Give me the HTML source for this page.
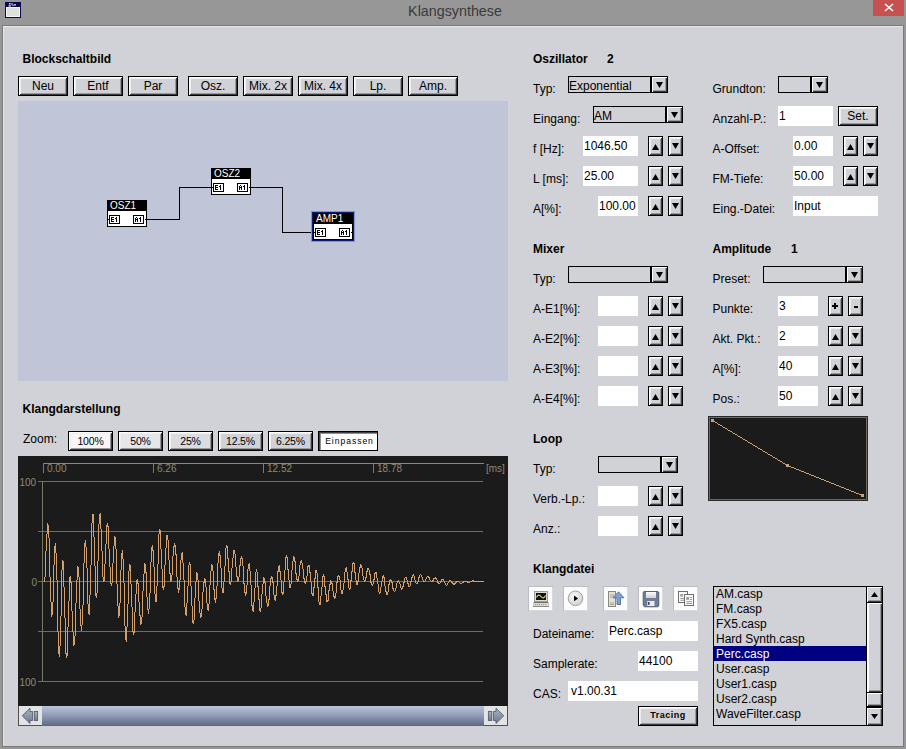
<!DOCTYPE html><html><head><meta charset="utf-8"><style>html,body{margin:0;padding:0;}body{width:906px;height:749px;position:relative;overflow:hidden;background:#9a9a9a;font-family:"Liberation Sans",sans-serif;}</style></head><body>
<div style="position:absolute;left:0px;top:0px;width:906px;height:749px;background:#979797;"></div>
<div style="position:absolute;left:5px;top:2px;width:16px;height:16px;background:#0a0a50;"></div>
<div style="position:absolute;left:6px;top:7px;width:14px;height:10px;background:#dde1d9;box-shadow: inset 0 0 0 1px #f4f4fa;"></div>
<svg style="position:absolute;left:5px;top:2px" width="16" height="6"><g fill="#e8e8f0"><rect x="4" y="1" width="1.5" height="1.5"/><rect x="3.5" y="3.3" width="2.5" height="1.2"/><rect x="6.3" y="1.3" width="1.3" height="1.3"/><rect x="7.3" y="2.5" width="1.3" height="1.3"/><rect x="9" y="2.3" width="2" height="1.2"/></g></svg>
<div style="position:absolute;left:355px;width:200px;text-align:center;top:3.90px;font-size:14.3px;line-height:14.3px;font-weight:normal;color:#3a3a3a;white-space:nowrap;">Klangsynthese</div>
<div style="position:absolute;left:873px;top:0px;width:31px;height:16px;background:#c75050;"></div>
<svg style="position:absolute;left:884px;top:3px" width="10" height="9"><path d="M1,1 L9,8 M9,1 L1,8" stroke="#fff" stroke-width="1.6"/></svg>
<div style="position:absolute;left:2px;top:25px;width:902px;height:722px;background:#7a7a7a;"></div>
<div style="position:absolute;left:3px;top:26px;width:900px;height:720px;background:#d1d2d7;"></div>
<div style="position:absolute;left:3px;top:26px;width:900px;height:1px;background:#e8e8ec;"></div>
<div style="position:absolute;left:3px;top:26px;width:1px;height:720px;background:#e8e8ec;"></div>
<div style="position:absolute;left:22.5px;top:52.84px;font-size:12px;line-height:12px;font-weight:bold;color:#000;white-space:nowrap;">Blockschaltbild</div>
<div style="position:absolute;left:18px;top:76px;width:48px;height:18px;border:1px solid #000;background:#d1d2d7;box-shadow: inset 1px 1px #fff, inset -1px -1px #3a3a3a, inset 2px 2px #eeeef0, inset -2px -2px #9a9a9a;"></div>
<div style="position:absolute;left:-57.0px;width:200px;text-align:center;top:79.84px;font-size:12px;line-height:12px;font-weight:normal;color:#000;white-space:nowrap;">Neu</div>
<div style="position:absolute;left:73px;top:76px;width:48px;height:18px;border:1px solid #000;background:#d1d2d7;box-shadow: inset 1px 1px #fff, inset -1px -1px #3a3a3a, inset 2px 2px #eeeef0, inset -2px -2px #9a9a9a;"></div>
<div style="position:absolute;left:-2.0px;width:200px;text-align:center;top:79.84px;font-size:12px;line-height:12px;font-weight:normal;color:#000;white-space:nowrap;">Entf</div>
<div style="position:absolute;left:128px;top:76px;width:48px;height:18px;border:1px solid #000;background:#d1d2d7;box-shadow: inset 1px 1px #fff, inset -1px -1px #3a3a3a, inset 2px 2px #eeeef0, inset -2px -2px #9a9a9a;"></div>
<div style="position:absolute;left:53.0px;width:200px;text-align:center;top:79.84px;font-size:12px;line-height:12px;font-weight:normal;color:#000;white-space:nowrap;">Par</div>
<div style="position:absolute;left:188px;top:76px;width:48px;height:18px;border:1px solid #000;background:#d1d2d7;box-shadow: inset 1px 1px #fff, inset -1px -1px #3a3a3a, inset 2px 2px #eeeef0, inset -2px -2px #9a9a9a;"></div>
<div style="position:absolute;left:113.0px;width:200px;text-align:center;top:79.84px;font-size:12px;line-height:12px;font-weight:normal;color:#000;white-space:nowrap;">Osz.</div>
<div style="position:absolute;left:243px;top:76px;width:48px;height:18px;border:1px solid #000;background:#d1d2d7;box-shadow: inset 1px 1px #fff, inset -1px -1px #3a3a3a, inset 2px 2px #eeeef0, inset -2px -2px #9a9a9a;"></div>
<div style="position:absolute;left:168.0px;width:200px;text-align:center;top:79.84px;font-size:12px;line-height:12px;font-weight:normal;color:#000;white-space:nowrap;">Mix. 2x</div>
<div style="position:absolute;left:298px;top:76px;width:48px;height:18px;border:1px solid #000;background:#d1d2d7;box-shadow: inset 1px 1px #fff, inset -1px -1px #3a3a3a, inset 2px 2px #eeeef0, inset -2px -2px #9a9a9a;"></div>
<div style="position:absolute;left:223.0px;width:200px;text-align:center;top:79.84px;font-size:12px;line-height:12px;font-weight:normal;color:#000;white-space:nowrap;">Mix. 4x</div>
<div style="position:absolute;left:353px;top:76px;width:48px;height:18px;border:1px solid #000;background:#d1d2d7;box-shadow: inset 1px 1px #fff, inset -1px -1px #3a3a3a, inset 2px 2px #eeeef0, inset -2px -2px #9a9a9a;"></div>
<div style="position:absolute;left:278.0px;width:200px;text-align:center;top:79.84px;font-size:12px;line-height:12px;font-weight:normal;color:#000;white-space:nowrap;">Lp.</div>
<div style="position:absolute;left:408px;top:76px;width:48px;height:18px;border:1px solid #000;background:#d1d2d7;box-shadow: inset 1px 1px #fff, inset -1px -1px #3a3a3a, inset 2px 2px #eeeef0, inset -2px -2px #9a9a9a;"></div>
<div style="position:absolute;left:333.0px;width:200px;text-align:center;top:79.84px;font-size:12px;line-height:12px;font-weight:normal;color:#000;white-space:nowrap;">Amp.</div>
<div style="position:absolute;left:18px;top:101px;width:490px;height:280px;background:#c0c6d7;"></div>
<div style="position:absolute;left:147px;top:219px;width:32px;height:1px;background:#000;"></div>
<div style="position:absolute;left:179px;top:187px;width:1px;height:33px;background:#000;"></div>
<div style="position:absolute;left:179px;top:187px;width:32px;height:1px;background:#000;"></div>
<div style="position:absolute;left:251px;top:187px;width:31px;height:1px;background:#000;"></div>
<div style="position:absolute;left:282px;top:187px;width:1px;height:46px;background:#000;"></div>
<div style="position:absolute;left:282px;top:232px;width:31px;height:1px;background:#000;"></div>
<div style="position:absolute;left:107px;top:200px;width:40px;height:27px;background:#000;"></div>
<div style="position:absolute;left:108px;top:211px;width:38px;height:15px;background:#fff;"></div>
<div style="position:absolute;left:110px;top:200.84px;font-size:10px;line-height:10px;font-weight:normal;color:#fff;white-space:nowrap;">OSZ1</div>
<svg style="position:absolute;left:109px;top:215px" width="11" height="9" shape-rendering="crispEdges"><rect x="0.5" y="0.5" width="10" height="8" fill="#fff" stroke="#000"/><rect x="2" y="2" width="1" height="1"/><rect x="3" y="2" width="1" height="1"/><rect x="4" y="2" width="1" height="1"/><rect x="2" y="3" width="1" height="1"/><rect x="2" y="4" width="1" height="1"/><rect x="3" y="4" width="1" height="1"/><rect x="4" y="4" width="1" height="1"/><rect x="2" y="5" width="1" height="1"/><rect x="2" y="6" width="1" height="1"/><rect x="3" y="6" width="1" height="1"/><rect x="4" y="6" width="1" height="1"/><rect x="7" y="2" width="1" height="1"/><rect x="6" y="3" width="1" height="1"/><rect x="7" y="3" width="1" height="1"/><rect x="7" y="4" width="1" height="1"/><rect x="7" y="5" width="1" height="1"/><rect x="7" y="6" width="1" height="1"/></svg>
<svg style="position:absolute;left:133px;top:215px" width="11" height="9" shape-rendering="crispEdges"><rect x="0.5" y="0.5" width="10" height="8" fill="#fff" stroke="#000"/><rect x="3" y="2" width="1" height="1"/><rect x="2" y="3" width="1" height="1"/><rect x="4" y="3" width="1" height="1"/><rect x="2" y="4" width="1" height="1"/><rect x="3" y="4" width="1" height="1"/><rect x="4" y="4" width="1" height="1"/><rect x="2" y="5" width="1" height="1"/><rect x="4" y="5" width="1" height="1"/><rect x="2" y="6" width="1" height="1"/><rect x="4" y="6" width="1" height="1"/><rect x="7" y="2" width="1" height="1"/><rect x="6" y="3" width="1" height="1"/><rect x="7" y="3" width="1" height="1"/><rect x="7" y="4" width="1" height="1"/><rect x="7" y="5" width="1" height="1"/><rect x="7" y="6" width="1" height="1"/></svg>
<div style="position:absolute;left:107px;top:219px;width:2px;height:1px;background:#000;"></div>
<div style="position:absolute;left:145px;top:219px;width:2px;height:1px;background:#000;"></div>
<div style="position:absolute;left:211px;top:168px;width:40px;height:27px;background:#000;"></div>
<div style="position:absolute;left:212px;top:179px;width:38px;height:15px;background:#fff;"></div>
<div style="position:absolute;left:214px;top:168.84px;font-size:10px;line-height:10px;font-weight:normal;color:#fff;white-space:nowrap;">OSZ2</div>
<svg style="position:absolute;left:213px;top:183px" width="11" height="9" shape-rendering="crispEdges"><rect x="0.5" y="0.5" width="10" height="8" fill="#fff" stroke="#000"/><rect x="2" y="2" width="1" height="1"/><rect x="3" y="2" width="1" height="1"/><rect x="4" y="2" width="1" height="1"/><rect x="2" y="3" width="1" height="1"/><rect x="2" y="4" width="1" height="1"/><rect x="3" y="4" width="1" height="1"/><rect x="4" y="4" width="1" height="1"/><rect x="2" y="5" width="1" height="1"/><rect x="2" y="6" width="1" height="1"/><rect x="3" y="6" width="1" height="1"/><rect x="4" y="6" width="1" height="1"/><rect x="7" y="2" width="1" height="1"/><rect x="6" y="3" width="1" height="1"/><rect x="7" y="3" width="1" height="1"/><rect x="7" y="4" width="1" height="1"/><rect x="7" y="5" width="1" height="1"/><rect x="7" y="6" width="1" height="1"/></svg>
<svg style="position:absolute;left:237px;top:183px" width="11" height="9" shape-rendering="crispEdges"><rect x="0.5" y="0.5" width="10" height="8" fill="#fff" stroke="#000"/><rect x="3" y="2" width="1" height="1"/><rect x="2" y="3" width="1" height="1"/><rect x="4" y="3" width="1" height="1"/><rect x="2" y="4" width="1" height="1"/><rect x="3" y="4" width="1" height="1"/><rect x="4" y="4" width="1" height="1"/><rect x="2" y="5" width="1" height="1"/><rect x="4" y="5" width="1" height="1"/><rect x="2" y="6" width="1" height="1"/><rect x="4" y="6" width="1" height="1"/><rect x="7" y="2" width="1" height="1"/><rect x="6" y="3" width="1" height="1"/><rect x="7" y="3" width="1" height="1"/><rect x="7" y="4" width="1" height="1"/><rect x="7" y="5" width="1" height="1"/><rect x="7" y="6" width="1" height="1"/></svg>
<div style="position:absolute;left:211px;top:187px;width:2px;height:1px;background:#000;"></div>
<div style="position:absolute;left:249px;top:187px;width:2px;height:1px;background:#000;"></div>
<div style="position:absolute;left:311px;top:211px;width:44px;height:31px;background:#7d95d8;"></div>
<div style="position:absolute;left:312px;top:212px;width:42px;height:29px;background:#0c1a70;"></div>
<div style="position:absolute;left:313px;top:213px;width:40px;height:27px;background:#000;"></div>
<div style="position:absolute;left:314px;top:224px;width:38px;height:15px;background:#fff;"></div>
<div style="position:absolute;left:316px;top:213.84px;font-size:10px;line-height:10px;font-weight:normal;color:#fff;white-space:nowrap;">AMP1</div>
<svg style="position:absolute;left:315px;top:228px" width="11" height="9" shape-rendering="crispEdges"><rect x="0.5" y="0.5" width="10" height="8" fill="#fff" stroke="#000"/><rect x="2" y="2" width="1" height="1"/><rect x="3" y="2" width="1" height="1"/><rect x="4" y="2" width="1" height="1"/><rect x="2" y="3" width="1" height="1"/><rect x="2" y="4" width="1" height="1"/><rect x="3" y="4" width="1" height="1"/><rect x="4" y="4" width="1" height="1"/><rect x="2" y="5" width="1" height="1"/><rect x="2" y="6" width="1" height="1"/><rect x="3" y="6" width="1" height="1"/><rect x="4" y="6" width="1" height="1"/><rect x="7" y="2" width="1" height="1"/><rect x="6" y="3" width="1" height="1"/><rect x="7" y="3" width="1" height="1"/><rect x="7" y="4" width="1" height="1"/><rect x="7" y="5" width="1" height="1"/><rect x="7" y="6" width="1" height="1"/></svg>
<svg style="position:absolute;left:339px;top:228px" width="11" height="9" shape-rendering="crispEdges"><rect x="0.5" y="0.5" width="10" height="8" fill="#fff" stroke="#000"/><rect x="3" y="2" width="1" height="1"/><rect x="2" y="3" width="1" height="1"/><rect x="4" y="3" width="1" height="1"/><rect x="2" y="4" width="1" height="1"/><rect x="3" y="4" width="1" height="1"/><rect x="4" y="4" width="1" height="1"/><rect x="2" y="5" width="1" height="1"/><rect x="4" y="5" width="1" height="1"/><rect x="2" y="6" width="1" height="1"/><rect x="4" y="6" width="1" height="1"/><rect x="7" y="2" width="1" height="1"/><rect x="6" y="3" width="1" height="1"/><rect x="7" y="3" width="1" height="1"/><rect x="7" y="4" width="1" height="1"/><rect x="7" y="5" width="1" height="1"/><rect x="7" y="6" width="1" height="1"/></svg>
<div style="position:absolute;left:313px;top:232px;width:2px;height:1px;background:#000;"></div>
<div style="position:absolute;left:351px;top:232px;width:2px;height:1px;background:#000;"></div>
<div style="position:absolute;left:22.5px;top:402.84px;font-size:12px;line-height:12px;font-weight:bold;color:#000;white-space:nowrap;">Klangdarstellung</div>
<div style="position:absolute;left:23px;top:433.34px;font-size:12px;line-height:12px;font-weight:normal;color:#000;white-space:nowrap;">Zoom:</div>
<div style="position:absolute;left:68px;top:431px;width:43px;height:18px;border:1px solid #000;background:#f6f6f8;box-shadow: inset 1px 1px #fff, inset -1px -1px #3a3a3a, inset 2px 2px #eeeef0, inset -2px -2px #9a9a9a;"></div>
<div style="position:absolute;left:-9.5px;width:200px;text-align:center;top:435.61px;font-size:10.5px;line-height:10.5px;font-weight:normal;color:#000;white-space:nowrap;letter-spacing:-0.2px;">100%</div>
<div style="position:absolute;left:118px;top:431px;width:43px;height:18px;border:1px solid #000;background:#e6e6ea;box-shadow: inset 1px 1px #fff, inset -1px -1px #3a3a3a, inset 2px 2px #eeeef0, inset -2px -2px #9a9a9a;"></div>
<div style="position:absolute;left:40.5px;width:200px;text-align:center;top:435.61px;font-size:10.5px;line-height:10.5px;font-weight:normal;color:#000;white-space:nowrap;letter-spacing:-0.2px;">50%</div>
<div style="position:absolute;left:168px;top:431px;width:43px;height:18px;border:1px solid #000;background:#dcdcdf;box-shadow: inset 1px 1px #fff, inset -1px -1px #3a3a3a, inset 2px 2px #eeeef0, inset -2px -2px #9a9a9a;"></div>
<div style="position:absolute;left:90.5px;width:200px;text-align:center;top:435.61px;font-size:10.5px;line-height:10.5px;font-weight:normal;color:#000;white-space:nowrap;letter-spacing:-0.2px;">25%</div>
<div style="position:absolute;left:218px;top:431px;width:43px;height:18px;border:1px solid #000;background:#d1d2d7;box-shadow: inset 1px 1px #fff, inset -1px -1px #3a3a3a, inset 2px 2px #eeeef0, inset -2px -2px #9a9a9a;"></div>
<div style="position:absolute;left:140.5px;width:200px;text-align:center;top:435.61px;font-size:10.5px;line-height:10.5px;font-weight:normal;color:#000;white-space:nowrap;letter-spacing:-0.2px;">12.5%</div>
<div style="position:absolute;left:268px;top:431px;width:43px;height:18px;border:1px solid #000;background:#d1d2d7;box-shadow: inset 1px 1px #fff, inset -1px -1px #3a3a3a, inset 2px 2px #eeeef0, inset -2px -2px #9a9a9a;"></div>
<div style="position:absolute;left:190.5px;width:200px;text-align:center;top:435.61px;font-size:10.5px;line-height:10.5px;font-weight:normal;color:#000;white-space:nowrap;letter-spacing:-0.2px;">6.25%</div>
<div style="position:absolute;left:318px;top:431px;width:58px;height:18px;border:1px solid #000;background:#fff;box-shadow: inset 1px 1px #404040, inset 2px 2px #909090;"></div>
<div style="position:absolute;left:248.0px;width:200px;text-align:center;top:437.22px;font-size:8.6px;line-height:8.6px;font-weight:normal;color:#000;white-space:nowrap;letter-spacing:0.95px;margin-left:1.5px;">Einpassen</div>
<div style="position:absolute;left:18px;top:456px;width:490px;height:250px;background:#1b1b1b;"></div>
<div style="position:absolute;left:43px;top:463px;width:441px;height:1px;background:#8c8976;"></div>
<div style="position:absolute;left:43px;top:463px;width:1px;height:10px;background:#7d7a68;"></div>
<div style="position:absolute;left:47px;top:463.54px;font-size:10px;line-height:10px;font-weight:normal;color:#8e8a74;white-space:nowrap;">0.00</div>
<div style="position:absolute;left:153px;top:463px;width:1px;height:10px;background:#7d7a68;"></div>
<div style="position:absolute;left:157px;top:463.54px;font-size:10px;line-height:10px;font-weight:normal;color:#8e8a74;white-space:nowrap;">6.26</div>
<div style="position:absolute;left:263px;top:463px;width:1px;height:10px;background:#7d7a68;"></div>
<div style="position:absolute;left:267px;top:463.54px;font-size:10px;line-height:10px;font-weight:normal;color:#8e8a74;white-space:nowrap;">12.52</div>
<div style="position:absolute;left:373px;top:463px;width:1px;height:10px;background:#7d7a68;"></div>
<div style="position:absolute;left:377px;top:463.54px;font-size:10px;line-height:10px;font-weight:normal;color:#8e8a74;white-space:nowrap;">18.78</div>
<div style="position:absolute;left:486px;top:463.54px;font-size:10px;line-height:10px;font-weight:normal;color:#8e8a74;white-space:nowrap;">[ms]</div>
<div style="position:absolute;left:38px;top:481px;width:445px;height:1px;background:#6f6d5e;"></div>
<div style="position:absolute;left:38px;top:531px;width:445px;height:1px;background:#6f6d5e;"></div>
<div style="position:absolute;left:38px;top:581px;width:445px;height:1px;background:#6f6d5e;"></div>
<div style="position:absolute;left:38px;top:631px;width:445px;height:1px;background:#6f6d5e;"></div>
<div style="position:absolute;left:38px;top:681px;width:445px;height:1px;background:#6f6d5e;"></div>
<div style="position:absolute;left:42px;top:481px;width:1px;height:201px;background:#7a7866;"></div>
<div style="position:absolute;left:19.5px;top:477.54px;font-size:10px;line-height:10px;font-weight:normal;color:#8e8a74;white-space:nowrap;">100</div>
<div style="position:absolute;left:31.5px;top:577.53px;font-size:10px;line-height:10px;font-weight:normal;color:#8e8a74;white-space:nowrap;">0</div>
<div style="position:absolute;left:19.5px;top:677.53px;font-size:10px;line-height:10px;font-weight:normal;color:#8e8a74;white-space:nowrap;">100</div>
<svg style="position:absolute;left:0;top:0" width="906" height="749" shape-rendering="crispEdges"><polyline points="43.5,581.5 44.5,581.5 44.5,579.5 45.5,574.5 45.5,564.5 45.5,555.5 46.5,546.5 46.5,537.5 47.5,530.5 47.5,525.5 47.5,523.5 48.5,526.5 48.5,532.5 49.5,542.5 49.5,554.5 49.5,569.5 50.5,583.5 50.5,596.5 51.5,607.5 51.5,613.5 51.5,616.5 52.5,613.5 52.5,607.5 53.5,596.5 53.5,584.5 53.5,571.5 54.5,559.5 54.5,549.5 55.5,543.5 55.5,547.5 56.5,557.5 56.5,571.5 57.5,588.5 57.5,606.5 57.5,624.5 58.5,639.5 58.5,650.5 59.5,656.5 59.5,651.5 60.5,640.5 60.5,624.5 61.5,607.5 61.5,590.5 61.5,575.5 62.5,565.5 62.5,560.5 63.5,561.5 63.5,568.5 63.5,579.5 64.5,593.5 64.5,610.5 65.5,625.5 65.5,639.5 65.5,650.5 66.5,656.5 66.5,657.5 67.5,653.5 67.5,645.5 67.5,633.5 68.5,620.5 68.5,607.5 69.5,594.5 69.5,584.5 69.5,578.5 70.5,576.5 70.5,579.5 71.5,585.5 71.5,594.5 71.5,605.5 72.5,616.5 72.5,626.5 73.5,636.5 73.5,642.5 73.5,645.5 74.5,644.5 74.5,640.5 75.5,632.5 75.5,621.5 75.5,609.5 76.5,597.5 76.5,585.5 77.5,575.5 77.5,569.5 77.5,566.5 78.5,567.5 78.5,572.5 79.5,581.5 79.5,591.5 79.5,603.5 80.5,614.5 80.5,623.5 81.5,628.5 81.5,630.5 81.5,628.5 82.5,621.5 82.5,611.5 83.5,598.5 83.5,583.5 83.5,569.5 84.5,556.5 84.5,546.5 85.5,540.5 85.5,539.5 85.5,542.5 86.5,550.5 86.5,561.5 87.5,573.5 87.5,587.5 87.5,599.5 88.5,608.5 88.5,613.5 89.5,614.5 89.5,610.5 89.5,601.5 90.5,588.5 90.5,573.5 91.5,556.5 91.5,541.5 91.5,527.5 92.5,518.5 92.5,514.5 93.5,514.5 93.5,520.5 93.5,530.5 94.5,543.5 94.5,558.5 95.5,572.5 95.5,585.5 95.5,593.5 96.5,597.5 96.5,596.5 97.5,590.5 97.5,581.5 97.5,568.5 98.5,554.5 98.5,540.5 98.5,528.5 99.5,519.5 99.5,514.5 100.5,513.5 100.5,516.5 100.5,523.5 101.5,533.5 101.5,545.5 102.5,556.5 102.5,566.5 102.5,574.5 103.5,579.5 103.5,581.5 104.5,580.5 104.5,575.5 104.5,568.5 105.5,559.5 105.5,549.5 106.5,539.5 106.5,531.5 106.5,526.5 107.5,523.5 107.5,524.5 108.5,528.5 108.5,535.5 108.5,543.5 109.5,553.5 109.5,562.5 110.5,570.5 110.5,577.5 110.5,582.5 111.5,585.5 111.5,584.5 112.5,581.5 112.5,575.5 112.5,567.5 113.5,558.5 113.5,549.5 114.5,542.5 114.5,537.5 114.5,536.5 115.5,538.5 115.5,544.5 116.5,553.5 116.5,564.5 116.5,577.5 117.5,590.5 117.5,601.5 118.5,610.5 118.5,615.5 118.5,617.5 119.5,614.5 119.5,607.5 120.5,598.5 120.5,586.5 120.5,575.5 121.5,564.5 121.5,555.5 122.5,550.5 122.5,554.5 123.5,562.5 123.5,575.5 124.5,589.5 124.5,605.5 124.5,620.5 125.5,631.5 125.5,638.5 126.5,641.5 126.5,639.5 126.5,632.5 127.5,622.5 127.5,610.5 128.5,597.5 128.5,585.5 128.5,574.5 129.5,567.5 129.5,564.5 130.5,565.5 130.5,570.5 130.5,578.5 131.5,589.5 131.5,601.5 132.5,612.5 132.5,622.5 132.5,629.5 133.5,633.5 133.5,634.5 134.5,631.5 134.5,625.5 134.5,617.5 135.5,607.5 135.5,598.5 136.5,590.5 136.5,583.5 136.5,580.5 137.5,579.5 137.5,581.5 138.5,585.5 138.5,591.5 138.5,597.5 139.5,605.5 139.5,612.5 140.5,618.5 140.5,622.5 140.5,624.5 141.5,623.5 141.5,620.5 142.5,614.5 142.5,605.5 142.5,596.5 143.5,586.5 143.5,577.5 144.5,570.5 144.5,565.5 144.5,563.5 145.5,565.5 145.5,569.5 146.5,575.5 146.5,584.5 146.5,592.5 147.5,601.5 147.5,607.5 148.5,612.5 148.5,613.5 148.5,611.5 149.5,606.5 149.5,598.5 150.5,588.5 150.5,577.5 150.5,566.5 151.5,557.5 151.5,549.5 152.5,545.5 152.5,544.5 152.5,547.5 153.5,553.5 153.5,561.5 154.5,571.5 154.5,581.5 154.5,590.5 155.5,597.5 155.5,601.5 156.5,601.5 156.5,598.5 156.5,591.5 157.5,581.5 157.5,570.5 158.5,558.5 158.5,546.5 158.5,537.5 159.5,531.5 159.5,529.5 160.5,530.5 160.5,536.5 160.5,544.5 161.5,553.5 161.5,563.5 162.5,573.5 162.5,581.5 162.5,586.5 163.5,589.5 163.5,588.5 164.5,584.5 164.5,577.5 164.5,569.5 165.5,560.5 165.5,551.5 166.5,544.5 166.5,538.5 166.5,535.5 167.5,535.5 167.5,537.5 168.5,542.5 168.5,548.5 168.5,556.5 169.5,563.5 169.5,570.5 170.5,576.5 170.5,580.5 170.5,581.5 171.5,580.5 171.5,577.5 172.5,572.5 172.5,566.5 172.5,559.5 173.5,553.5 173.5,548.5 174.5,544.5 174.5,543.5 175.5,546.5 175.5,551.5 176.5,557.5 176.5,565.5 176.5,573.5 177.5,580.5 177.5,586.5 178.5,590.5 178.5,592.5 178.5,591.5 179.5,588.5 179.5,583.5 180.5,577.5 180.5,569.5 180.5,562.5 181.5,557.5 181.5,553.5 182.5,552.5 182.5,554.5 182.5,558.5 183.5,566.5 183.5,575.5 184.5,584.5 184.5,594.5 184.5,603.5 185.5,610.5 185.5,614.5 186.5,615.5 186.5,612.5 186.5,607.5 187.5,599.5 187.5,590.5 188.5,581.5 188.5,573.5 188.5,566.5 189.5,563.5 189.5,562.5 190.5,566.5 190.5,572.5 190.5,580.5 191.5,590.5 191.5,601.5 192.5,610.5 192.5,617.5 192.5,622.5 193.5,623.5 193.5,622.5 194.5,617.5 194.5,610.5 194.5,602.5 195.5,594.5 195.5,585.5 196.5,579.5 196.5,574.5 196.5,572.5 197.5,573.5 197.5,577.5 198.5,582.5 198.5,589.5 198.5,597.5 199.5,604.5 199.5,610.5 200.5,615.5 200.5,617.5 201.5,615.5 201.5,611.5 202.5,606.5 202.5,600.5 202.5,594.5 203.5,589.5 203.5,584.5 204.5,580.5 204.5,578.5 205.5,580.5 205.5,584.5 206.5,589.5 206.5,595.5 206.5,600.5 207.5,605.5 207.5,608.5 208.5,610.5 208.5,609.5 208.5,606.5 209.5,601.5 209.5,595.5 209.5,588.5 210.5,581.5 210.5,574.5 211.5,568.5 211.5,565.5 211.5,564.5 212.5,565.5 212.5,568.5 213.5,573.5 213.5,579.5 213.5,586.5 214.5,592.5 214.5,597.5 215.5,601.5 215.5,602.5 215.5,600.5 216.5,596.5 216.5,590.5 217.5,582.5 217.5,574.5 217.5,566.5 218.5,559.5 218.5,554.5 219.5,551.5 219.5,550.5 219.5,553.5 220.5,557.5 220.5,564.5 221.5,571.5 221.5,578.5 221.5,585.5 222.5,590.5 222.5,592.5 223.5,592.5 223.5,590.5 223.5,585.5 224.5,578.5 224.5,570.5 225.5,562.5 225.5,555.5 225.5,549.5 226.5,546.5 226.5,545.5 227.5,546.5 227.5,550.5 227.5,555.5 228.5,561.5 228.5,568.5 229.5,574.5 229.5,579.5 229.5,582.5 230.5,584.5 230.5,583.5 231.5,580.5 231.5,576.5 231.5,571.5 232.5,565.5 232.5,560.5 233.5,555.5 233.5,552.5 233.5,550.5 234.5,550.5 234.5,552.5 235.5,555.5 235.5,559.5 235.5,564.5 236.5,569.5 236.5,574.5 237.5,578.5 237.5,580.5 237.5,581.5 238.5,580.5 238.5,578.5 239.5,575.5 239.5,571.5 239.5,567.5 240.5,563.5 240.5,559.5 241.5,557.5 241.5,556.5 242.5,559.5 242.5,563.5 243.5,568.5 243.5,574.5 243.5,580.5 244.5,586.5 244.5,590.5 245.5,594.5 245.5,595.5 245.5,594.5 246.5,592.5 246.5,587.5 247.5,582.5 247.5,576.5 247.5,571.5 248.5,566.5 248.5,564.5 249.5,563.5 249.5,564.5 249.5,568.5 250.5,573.5 250.5,580.5 251.5,588.5 251.5,596.5 251.5,602.5 252.5,608.5 252.5,610.5 253.5,611.5 253.5,609.5 253.5,605.5 254.5,598.5 254.5,591.5 255.5,584.5 255.5,577.5 255.5,573.5 256.5,570.5 257.5,573.5 257.5,577.5 257.5,583.5 258.5,589.5 258.5,596.5 259.5,602.5 259.5,607.5 259.5,610.5 260.5,611.5 260.5,609.5 261.5,606.5 261.5,602.5 261.5,596.5 262.5,591.5 262.5,586.5 263.5,581.5 263.5,579.5 263.5,577.5 264.5,578.5 264.5,580.5 265.5,584.5 265.5,588.5 265.5,593.5 266.5,598.5 266.5,601.5 267.5,604.5 267.5,606.5 268.5,604.5 268.5,601.5 269.5,597.5 269.5,593.5 269.5,588.5 270.5,583.5 270.5,579.5 271.5,577.5 271.5,575.5 271.5,576.5 272.5,577.5 272.5,580.5 273.5,584.5 273.5,589.5 273.5,593.5 274.5,596.5 274.5,599.5 275.5,600.5 275.5,599.5 275.5,597.5 276.5,593.5 276.5,589.5 277.5,583.5 277.5,578.5 277.5,573.5 278.5,569.5 278.5,566.5 279.5,565.5 279.5,566.5 279.5,569.5 280.5,573.5 280.5,577.5 281.5,582.5 281.5,587.5 281.5,591.5 282.5,593.5 282.5,594.5 283.5,593.5 283.5,589.5 283.5,585.5 284.5,579.5 284.5,573.5 285.5,567.5 285.5,562.5 285.5,558.5 286.5,556.5 287.5,558.5 287.5,561.5 287.5,566.5 288.5,572.5 288.5,577.5 289.5,582.5 289.5,585.5 289.5,587.5 290.5,587.5 290.5,585.5 291.5,582.5 291.5,577.5 291.5,572.5 292.5,567.5 292.5,562.5 293.5,559.5 293.5,557.5 293.5,556.5 294.5,557.5 294.5,559.5 295.5,563.5 295.5,567.5 295.5,571.5 296.5,575.5 296.5,578.5 297.5,580.5 297.5,581.5 298.5,579.5 298.5,577.5 299.5,574.5 299.5,570.5 299.5,566.5 300.5,563.5 300.5,561.5 301.5,560.5 301.5,561.5 302.5,564.5 302.5,567.5 303.5,570.5 303.5,573.5 303.5,577.5 304.5,579.5 304.5,582.5 305.5,583.5 305.5,582.5 306.5,580.5 306.5,577.5 307.5,574.5 307.5,570.5 307.5,567.5 308.5,565.5 309.5,565.5 309.5,567.5 309.5,570.5 310.5,574.5 310.5,579.5 311.5,584.5 311.5,588.5 311.5,592.5 312.5,594.5 312.5,595.5 313.5,595.5 313.5,592.5 313.5,589.5 314.5,585.5 314.5,580.5 315.5,576.5 315.5,572.5 315.5,570.5 316.5,570.5 316.5,571.5 317.5,574.5 317.5,578.5 317.5,584.5 318.5,590.5 318.5,595.5 318.5,600.5 319.5,603.5 319.5,604.5 320.5,604.5 320.5,602.5 320.5,598.5 321.5,593.5 321.5,589.5 322.5,584.5 322.5,580.5 322.5,577.5 323.5,575.5 324.5,577.5 324.5,580.5 324.5,584.5 325.5,588.5 325.5,592.5 326.5,596.5 326.5,599.5 326.5,601.5 327.5,601.5 328.5,599.5 328.5,596.5 328.5,592.5 329.5,588.5 329.5,585.5 330.5,583.5 330.5,581.5 330.5,580.5 331.5,581.5 331.5,582.5 332.5,584.5 332.5,587.5 332.5,589.5 333.5,592.5 333.5,595.5 334.5,597.5 334.5,598.5 335.5,596.5 335.5,594.5 336.5,591.5 336.5,588.5 336.5,584.5 337.5,580.5 337.5,577.5 338.5,575.5 338.5,574.5 338.5,575.5 339.5,576.5 339.5,578.5 340.5,581.5 340.5,585.5 340.5,588.5 341.5,591.5 341.5,593.5 342.5,593.5 342.5,591.5 343.5,588.5 343.5,585.5 344.5,580.5 344.5,576.5 344.5,573.5 345.5,570.5 345.5,568.5 346.5,567.5 346.5,568.5 346.5,570.5 347.5,573.5 347.5,577.5 348.5,581.5 348.5,584.5 348.5,587.5 349.5,588.5 349.5,589.5 350.5,588.5 350.5,585.5 350.5,582.5 351.5,578.5 351.5,573.5 352.5,569.5 352.5,565.5 352.5,563.5 353.5,562.5 354.5,564.5 354.5,567.5 354.5,570.5 355.5,574.5 355.5,578.5 356.5,581.5 356.5,583.5 356.5,584.5 357.5,584.5 357.5,582.5 358.5,580.5 358.5,577.5 358.5,574.5 359.5,571.5 359.5,568.5 360.5,566.5 360.5,564.5 361.5,565.5 361.5,566.5 362.5,569.5 362.5,571.5 362.5,574.5 363.5,577.5 363.5,579.5 364.5,580.5 364.5,581.5 365.5,580.5 365.5,578.5 366.5,576.5 366.5,574.5 366.5,572.5 367.5,570.5 367.5,568.5 368.5,568.5 368.5,569.5 369.5,570.5 369.5,573.5 370.5,575.5 370.5,578.5 370.5,581.5 371.5,583.5 371.5,584.5 372.5,585.5 372.5,584.5 373.5,583.5 373.5,580.5 374.5,578.5 374.5,576.5 374.5,574.5 375.5,572.5 376.5,572.5 376.5,573.5 376.5,576.5 377.5,579.5 377.5,582.5 378.5,585.5 378.5,588.5 378.5,591.5 379.5,592.5 379.5,593.5 380.5,592.5 380.5,590.5 380.5,588.5 381.5,585.5 381.5,582.5 382.5,579.5 382.5,577.5 382.5,576.5 383.5,575.5 383.5,576.5 384.5,578.5 384.5,581.5 384.5,584.5 385.5,587.5 385.5,590.5 386.5,592.5 386.5,594.5 387.5,594.5 387.5,592.5 388.5,591.5 388.5,588.5 388.5,585.5 389.5,583.5 389.5,581.5 390.5,579.5 391.5,580.5 391.5,581.5 392.5,583.5 392.5,585.5 392.5,587.5 393.5,589.5 393.5,590.5 394.5,591.5 395.5,590.5 395.5,588.5 396.5,587.5 396.5,585.5 396.5,583.5 397.5,582.5 397.5,581.5 398.5,580.5 398.5,581.5 399.5,582.5 399.5,583.5 400.5,584.5 400.5,586.5 400.5,587.5 401.5,588.5 401.5,589.5 402.5,588.5 402.5,587.5 403.5,585.5 403.5,583.5 404.5,581.5 404.5,580.5 404.5,578.5 405.5,577.5 406.5,577.5 406.5,578.5 406.5,579.5 407.5,580.5 407.5,582.5 408.5,584.5 408.5,585.5 408.5,586.5 409.5,586.5 410.5,585.5 410.5,583.5 410.5,582.5 411.5,580.5 411.5,578.5 412.5,576.5 412.5,575.5 413.5,574.5 413.5,575.5 414.5,576.5 414.5,577.5 414.5,579.5 415.5,580.5 415.5,582.5 416.5,583.5 417.5,583.5 417.5,582.5 418.5,581.5 418.5,579.5 418.5,578.5 419.5,576.5 419.5,575.5 420.5,574.5 421.5,575.5 421.5,576.5 422.5,577.5 422.5,578.5 422.5,579.5 423.5,580.5 423.5,581.5 424.5,581.5 425.5,580.5 425.5,579.5 426.5,578.5 426.5,577.5 427.5,576.5 428.5,576.5 428.5,577.5 429.5,577.5 429.5,578.5 429.5,579.5 430.5,580.5 431.5,581.5 432.5,581.5 432.5,580.5 433.5,580.5 433.5,579.5 433.5,578.5 434.5,578.5 435.5,577.5 435.5,578.5 436.5,578.5 436.5,579.5 437.5,580.5 437.5,581.5 437.5,582.5 438.5,582.5 438.5,583.5 439.5,583.5 440.5,582.5 440.5,581.5 441.5,581.5 441.5,580.5 441.5,579.5 442.5,579.5 443.5,579.5 443.5,580.5 444.5,581.5 444.5,582.5 445.5,583.5 445.5,584.5 446.5,585.5 447.5,584.5 447.5,583.5 448.5,582.5 449.5,581.5 449.5,580.5 450.5,580.5 451.5,581.5 451.5,582.5 452.5,582.5 452.5,583.5 453.5,583.5 453.5,584.5 454.5,584.5 454.5,583.5 455.5,583.5 455.5,582.5 456.5,582.5 456.5,581.5 457.5,581.5 458.5,581.5 459.5,582.5 460.5,583.5 461.5,583.5 462.5,582.5 463.5,582.5 463.5,581.5 464.5,581.5 465.5,581.5 466.5,581.5 467.5,581.5 467.5,582.5 468.5,582.5 469.5,582.5 470.5,581.5 471.5,581.5 472.5,580.5 473.5,580.5 473.5,581.5 474.5,581.5 475.5,581.5 476.5,581.5 477.5,581.5 478.5,581.5 479.5,581.5 480.5,581.5 481.5,581.5 482.5,581.5 483.5,581.5" fill="none" stroke="#d2a06e" stroke-width="1"/></svg>
<div style="position:absolute;left:18px;top:706px;width:490px;height:20px;background:linear-gradient(#b8c4d8,#8e9ab2 50%,#5c6882);"></div>
<div style="position:absolute;left:18px;top:706px;width:24px;height:20px;background:#e2e3e5;box-shadow: inset 1px 0 #505050, inset 0 -1px #505050;"></div>
<svg style="position:absolute;left:18px;top:706px" width="24" height="19"><defs><linearGradient id="ag" x1="0" y1="0" x2="0" y2="1"><stop offset="0" stop-color="#a8b4c4"/><stop offset="1" stop-color="#6c7a8e"/></linearGradient></defs><path d="M4.2,9.8 L12,2.2 V5.5 H14.6 V14.5 H12 V17.5 Z" fill="url(#ag)" stroke="#56606e" stroke-width="0.9"/><rect x="16.3" y="5.5" width="3.3" height="9" fill="url(#ag)" stroke="#56606e" stroke-width="0.9"/></svg>
<div style="position:absolute;left:484px;top:706px;width:24px;height:20px;background:#e2e3e5;box-shadow: inset -1px 0 #505050, inset 0 -1px #505050;"></div>
<svg style="position:absolute;left:484px;top:706px" width="24" height="19"><path d="M19.8,9.8 L12,2.2 V5.5 H9.4 V14.5 H12 V17.5 Z" fill="url(#ag)" stroke="#56606e" stroke-width="0.9"/><rect x="4.4" y="5.5" width="3.3" height="9" fill="url(#ag)" stroke="#56606e" stroke-width="0.9"/></svg>
<div style="position:absolute;left:533px;top:52.84px;font-size:12px;line-height:12px;font-weight:bold;color:#000;white-space:nowrap;">Oszillator</div>
<div style="position:absolute;left:607px;top:52.84px;font-size:12px;line-height:12px;font-weight:bold;color:#000;white-space:nowrap;">2</div>
<div style="position:absolute;left:533px;top:82.84px;font-size:12px;line-height:12px;font-weight:normal;color:#000;white-space:nowrap;">Typ:</div>
<div style="position:absolute;left:568px;top:76px;width:98px;height:15px;border:1px solid #000;background:#d1d2d7;"></div>
<div style="position:absolute;left:650px;top:77px;width:2px;height:15px;background:#000;"></div>
<div style="position:absolute;left:652px;top:77px;width:15px;height:15px;background:#d1d2d7;box-shadow: inset 1px 1px #fff, inset -1px -1px #3a3a3a, inset -2px -2px #9a9a9a;"></div>
<svg style="position:absolute;left:656.0px;top:81.5px" width="7" height="6"><polygon points="0,0 7,0 3.5,6" fill="#000"/></svg>
<div style="position:absolute;left:569px;top:79.54px;font-size:12px;line-height:12px;font-weight:normal;color:#000;white-space:nowrap;">Exponential</div>
<div style="position:absolute;left:533px;top:112.84px;font-size:12px;line-height:12px;font-weight:normal;color:#000;white-space:nowrap;">Eingang:</div>
<div style="position:absolute;left:593px;top:106px;width:88px;height:15px;border:1px solid #000;background:#d1d2d7;"></div>
<div style="position:absolute;left:665px;top:107px;width:2px;height:15px;background:#000;"></div>
<div style="position:absolute;left:667px;top:107px;width:15px;height:15px;background:#d1d2d7;box-shadow: inset 1px 1px #fff, inset -1px -1px #3a3a3a, inset -2px -2px #9a9a9a;"></div>
<svg style="position:absolute;left:671.0px;top:111.5px" width="7" height="6"><polygon points="0,0 7,0 3.5,6" fill="#000"/></svg>
<div style="position:absolute;left:594px;top:109.54px;font-size:12px;line-height:12px;font-weight:normal;color:#000;white-space:nowrap;">AM</div>
<div style="position:absolute;left:533px;top:142.84px;font-size:12px;line-height:12px;font-weight:normal;color:#000;white-space:nowrap;">f [Hz]:</div>
<div style="position:absolute;left:583px;top:136px;width:55px;height:20px;background:#fff;"></div>
<div style="position:absolute;left:584px;top:139.84px;font-size:12px;line-height:12px;font-weight:normal;color:#000;white-space:nowrap;">1046.50</div>
<div style="position:absolute;left:648px;top:136px;width:13px;height:18px;border:1px solid #000;background:#d1d2d7;box-shadow: inset 1px 1px #fff, inset -1px -1px #3a3a3a, inset 2px 2px #eeeef0, inset -2px -2px #9a9a9a;"></div>
<svg style="position:absolute;left:651.5px;top:143.5px" width="7" height="6"><polygon points="0,6 7,6 3.5,0" fill="#000"/></svg>
<div style="position:absolute;left:668px;top:136px;width:13px;height:18px;border:1px solid #000;background:#d1d2d7;box-shadow: inset 1px 1px #fff, inset -1px -1px #3a3a3a, inset 2px 2px #eeeef0, inset -2px -2px #9a9a9a;"></div>
<svg style="position:absolute;left:671.5px;top:142.5px" width="7" height="6"><polygon points="0,0 7,0 3.5,6" fill="#000"/></svg>
<div style="position:absolute;left:533px;top:172.84px;font-size:12px;line-height:12px;font-weight:normal;color:#000;white-space:nowrap;">L [ms]:</div>
<div style="position:absolute;left:583px;top:166px;width:55px;height:20px;background:#fff;"></div>
<div style="position:absolute;left:584px;top:169.84px;font-size:12px;line-height:12px;font-weight:normal;color:#000;white-space:nowrap;">25.00</div>
<div style="position:absolute;left:648px;top:166px;width:13px;height:18px;border:1px solid #000;background:#d1d2d7;box-shadow: inset 1px 1px #fff, inset -1px -1px #3a3a3a, inset 2px 2px #eeeef0, inset -2px -2px #9a9a9a;"></div>
<svg style="position:absolute;left:651.5px;top:173.5px" width="7" height="6"><polygon points="0,6 7,6 3.5,0" fill="#000"/></svg>
<div style="position:absolute;left:668px;top:166px;width:13px;height:18px;border:1px solid #000;background:#d1d2d7;box-shadow: inset 1px 1px #fff, inset -1px -1px #3a3a3a, inset 2px 2px #eeeef0, inset -2px -2px #9a9a9a;"></div>
<svg style="position:absolute;left:671.5px;top:172.5px" width="7" height="6"><polygon points="0,0 7,0 3.5,6" fill="#000"/></svg>
<div style="position:absolute;left:533px;top:202.84px;font-size:12px;line-height:12px;font-weight:normal;color:#000;white-space:nowrap;">A[%]:</div>
<div style="position:absolute;left:598px;top:196px;width:40px;height:20px;background:#fff;"></div>
<div style="position:absolute;left:599px;top:199.84px;font-size:12px;line-height:12px;font-weight:normal;color:#000;white-space:nowrap;">100.00</div>
<div style="position:absolute;left:648px;top:196px;width:13px;height:18px;border:1px solid #000;background:#d1d2d7;box-shadow: inset 1px 1px #fff, inset -1px -1px #3a3a3a, inset 2px 2px #eeeef0, inset -2px -2px #9a9a9a;"></div>
<svg style="position:absolute;left:651.5px;top:203.5px" width="7" height="6"><polygon points="0,6 7,6 3.5,0" fill="#000"/></svg>
<div style="position:absolute;left:668px;top:196px;width:13px;height:18px;border:1px solid #000;background:#d1d2d7;box-shadow: inset 1px 1px #fff, inset -1px -1px #3a3a3a, inset 2px 2px #eeeef0, inset -2px -2px #9a9a9a;"></div>
<svg style="position:absolute;left:671.5px;top:202.5px" width="7" height="6"><polygon points="0,0 7,0 3.5,6" fill="#000"/></svg>
<div style="position:absolute;left:712.5px;top:82.84px;font-size:12px;line-height:12px;font-weight:normal;color:#000;white-space:nowrap;">Grundton:</div>
<div style="position:absolute;left:778px;top:76px;width:48px;height:15px;border:1px solid #000;background:#d1d2d7;"></div>
<div style="position:absolute;left:810px;top:77px;width:2px;height:15px;background:#000;"></div>
<div style="position:absolute;left:812px;top:77px;width:15px;height:15px;background:#d1d2d7;box-shadow: inset 1px 1px #fff, inset -1px -1px #3a3a3a, inset -2px -2px #9a9a9a;"></div>
<svg style="position:absolute;left:816.0px;top:81.5px" width="7" height="6"><polygon points="0,0 7,0 3.5,6" fill="#000"/></svg>
<div style="position:absolute;left:712.5px;top:112.84px;font-size:12px;line-height:12px;font-weight:normal;color:#000;white-space:nowrap;">Anzahl-P.:</div>
<div style="position:absolute;left:778px;top:106px;width:55px;height:20px;background:#fff;"></div>
<div style="position:absolute;left:779px;top:109.84px;font-size:12px;line-height:12px;font-weight:normal;color:#000;white-space:nowrap;">1</div>
<div style="position:absolute;left:838px;top:106px;width:38px;height:18px;border:1px solid #000;background:#d1d2d7;box-shadow: inset 1px 1px #fff, inset -1px -1px #3a3a3a, inset 2px 2px #eeeef0, inset -2px -2px #9a9a9a;"></div>
<div style="position:absolute;left:758.0px;width:200px;text-align:center;top:109.84px;font-size:12px;line-height:12px;font-weight:normal;color:#000;white-space:nowrap;">Set.</div>
<div style="position:absolute;left:712.5px;top:142.84px;font-size:12px;line-height:12px;font-weight:normal;color:#000;white-space:nowrap;">A-Offset:</div>
<div style="position:absolute;left:793px;top:136px;width:40px;height:20px;background:#fff;"></div>
<div style="position:absolute;left:794px;top:139.84px;font-size:12px;line-height:12px;font-weight:normal;color:#000;white-space:nowrap;">0.00</div>
<div style="position:absolute;left:843px;top:136px;width:13px;height:18px;border:1px solid #000;background:#d1d2d7;box-shadow: inset 1px 1px #fff, inset -1px -1px #3a3a3a, inset 2px 2px #eeeef0, inset -2px -2px #9a9a9a;"></div>
<svg style="position:absolute;left:846.5px;top:143.5px" width="7" height="6"><polygon points="0,6 7,6 3.5,0" fill="#000"/></svg>
<div style="position:absolute;left:863px;top:136px;width:13px;height:18px;border:1px solid #000;background:#d1d2d7;box-shadow: inset 1px 1px #fff, inset -1px -1px #3a3a3a, inset 2px 2px #eeeef0, inset -2px -2px #9a9a9a;"></div>
<svg style="position:absolute;left:866.5px;top:142.5px" width="7" height="6"><polygon points="0,0 7,0 3.5,6" fill="#000"/></svg>
<div style="position:absolute;left:712.5px;top:172.84px;font-size:12px;line-height:12px;font-weight:normal;color:#000;white-space:nowrap;">FM-Tiefe:</div>
<div style="position:absolute;left:793px;top:166px;width:40px;height:20px;background:#fff;"></div>
<div style="position:absolute;left:794px;top:169.84px;font-size:12px;line-height:12px;font-weight:normal;color:#000;white-space:nowrap;">50.00</div>
<div style="position:absolute;left:843px;top:166px;width:13px;height:18px;border:1px solid #000;background:#d1d2d7;box-shadow: inset 1px 1px #fff, inset -1px -1px #3a3a3a, inset 2px 2px #eeeef0, inset -2px -2px #9a9a9a;"></div>
<svg style="position:absolute;left:846.5px;top:173.5px" width="7" height="6"><polygon points="0,6 7,6 3.5,0" fill="#000"/></svg>
<div style="position:absolute;left:863px;top:166px;width:13px;height:18px;border:1px solid #000;background:#d1d2d7;box-shadow: inset 1px 1px #fff, inset -1px -1px #3a3a3a, inset 2px 2px #eeeef0, inset -2px -2px #9a9a9a;"></div>
<svg style="position:absolute;left:866.5px;top:172.5px" width="7" height="6"><polygon points="0,0 7,0 3.5,6" fill="#000"/></svg>
<div style="position:absolute;left:712.5px;top:202.84px;font-size:12px;line-height:12px;font-weight:normal;color:#000;white-space:nowrap;">Eing.-Datei:</div>
<div style="position:absolute;left:793px;top:196px;width:85px;height:20px;background:#fff;"></div>
<div style="position:absolute;left:794px;top:199.84px;font-size:12px;line-height:12px;font-weight:normal;color:#000;white-space:nowrap;">Input</div>
<div style="position:absolute;left:533px;top:242.84px;font-size:12px;line-height:12px;font-weight:bold;color:#000;white-space:nowrap;">Mixer</div>
<div style="position:absolute;left:533px;top:272.84px;font-size:12px;line-height:12px;font-weight:normal;color:#000;white-space:nowrap;">Typ:</div>
<div style="position:absolute;left:568px;top:266px;width:98px;height:15px;border:1px solid #000;background:#d1d2d7;"></div>
<div style="position:absolute;left:650px;top:267px;width:2px;height:15px;background:#000;"></div>
<div style="position:absolute;left:652px;top:267px;width:15px;height:15px;background:#d1d2d7;box-shadow: inset 1px 1px #fff, inset -1px -1px #3a3a3a, inset -2px -2px #9a9a9a;"></div>
<svg style="position:absolute;left:656.0px;top:271.5px" width="7" height="6"><polygon points="0,0 7,0 3.5,6" fill="#000"/></svg>
<div style="position:absolute;left:533px;top:302.84px;font-size:12px;line-height:12px;font-weight:normal;color:#000;white-space:nowrap;">A-E1[%]:</div>
<div style="position:absolute;left:598px;top:296px;width:40px;height:20px;background:#fff;"></div>
<div style="position:absolute;left:648px;top:296px;width:13px;height:18px;border:1px solid #000;background:#d1d2d7;box-shadow: inset 1px 1px #fff, inset -1px -1px #3a3a3a, inset 2px 2px #eeeef0, inset -2px -2px #9a9a9a;"></div>
<svg style="position:absolute;left:651.5px;top:303.5px" width="7" height="6"><polygon points="0,6 7,6 3.5,0" fill="#000"/></svg>
<div style="position:absolute;left:668px;top:296px;width:13px;height:18px;border:1px solid #000;background:#d1d2d7;box-shadow: inset 1px 1px #fff, inset -1px -1px #3a3a3a, inset 2px 2px #eeeef0, inset -2px -2px #9a9a9a;"></div>
<svg style="position:absolute;left:671.5px;top:302.5px" width="7" height="6"><polygon points="0,0 7,0 3.5,6" fill="#000"/></svg>
<div style="position:absolute;left:533px;top:332.84px;font-size:12px;line-height:12px;font-weight:normal;color:#000;white-space:nowrap;">A-E2[%]:</div>
<div style="position:absolute;left:598px;top:326px;width:40px;height:20px;background:#fff;"></div>
<div style="position:absolute;left:648px;top:326px;width:13px;height:18px;border:1px solid #000;background:#d1d2d7;box-shadow: inset 1px 1px #fff, inset -1px -1px #3a3a3a, inset 2px 2px #eeeef0, inset -2px -2px #9a9a9a;"></div>
<svg style="position:absolute;left:651.5px;top:333.5px" width="7" height="6"><polygon points="0,6 7,6 3.5,0" fill="#000"/></svg>
<div style="position:absolute;left:668px;top:326px;width:13px;height:18px;border:1px solid #000;background:#d1d2d7;box-shadow: inset 1px 1px #fff, inset -1px -1px #3a3a3a, inset 2px 2px #eeeef0, inset -2px -2px #9a9a9a;"></div>
<svg style="position:absolute;left:671.5px;top:332.5px" width="7" height="6"><polygon points="0,0 7,0 3.5,6" fill="#000"/></svg>
<div style="position:absolute;left:533px;top:362.84px;font-size:12px;line-height:12px;font-weight:normal;color:#000;white-space:nowrap;">A-E3[%]:</div>
<div style="position:absolute;left:598px;top:356px;width:40px;height:20px;background:#fff;"></div>
<div style="position:absolute;left:648px;top:356px;width:13px;height:18px;border:1px solid #000;background:#d1d2d7;box-shadow: inset 1px 1px #fff, inset -1px -1px #3a3a3a, inset 2px 2px #eeeef0, inset -2px -2px #9a9a9a;"></div>
<svg style="position:absolute;left:651.5px;top:363.5px" width="7" height="6"><polygon points="0,6 7,6 3.5,0" fill="#000"/></svg>
<div style="position:absolute;left:668px;top:356px;width:13px;height:18px;border:1px solid #000;background:#d1d2d7;box-shadow: inset 1px 1px #fff, inset -1px -1px #3a3a3a, inset 2px 2px #eeeef0, inset -2px -2px #9a9a9a;"></div>
<svg style="position:absolute;left:671.5px;top:362.5px" width="7" height="6"><polygon points="0,0 7,0 3.5,6" fill="#000"/></svg>
<div style="position:absolute;left:533px;top:392.84px;font-size:12px;line-height:12px;font-weight:normal;color:#000;white-space:nowrap;">A-E4[%]:</div>
<div style="position:absolute;left:598px;top:386px;width:40px;height:20px;background:#fff;"></div>
<div style="position:absolute;left:648px;top:386px;width:13px;height:18px;border:1px solid #000;background:#d1d2d7;box-shadow: inset 1px 1px #fff, inset -1px -1px #3a3a3a, inset 2px 2px #eeeef0, inset -2px -2px #9a9a9a;"></div>
<svg style="position:absolute;left:651.5px;top:393.5px" width="7" height="6"><polygon points="0,6 7,6 3.5,0" fill="#000"/></svg>
<div style="position:absolute;left:668px;top:386px;width:13px;height:18px;border:1px solid #000;background:#d1d2d7;box-shadow: inset 1px 1px #fff, inset -1px -1px #3a3a3a, inset 2px 2px #eeeef0, inset -2px -2px #9a9a9a;"></div>
<svg style="position:absolute;left:671.5px;top:392.5px" width="7" height="6"><polygon points="0,0 7,0 3.5,6" fill="#000"/></svg>
<div style="position:absolute;left:712.5px;top:242.84px;font-size:12px;line-height:12px;font-weight:bold;color:#000;white-space:nowrap;">Amplitude</div>
<div style="position:absolute;left:791px;top:242.84px;font-size:12px;line-height:12px;font-weight:bold;color:#000;white-space:nowrap;">1</div>
<div style="position:absolute;left:712.5px;top:272.84px;font-size:12px;line-height:12px;font-weight:normal;color:#000;white-space:nowrap;">Preset:</div>
<div style="position:absolute;left:763px;top:266px;width:98px;height:15px;border:1px solid #000;background:#d1d2d7;"></div>
<div style="position:absolute;left:845px;top:267px;width:2px;height:15px;background:#000;"></div>
<div style="position:absolute;left:847px;top:267px;width:15px;height:15px;background:#d1d2d7;box-shadow: inset 1px 1px #fff, inset -1px -1px #3a3a3a, inset -2px -2px #9a9a9a;"></div>
<svg style="position:absolute;left:851.0px;top:271.5px" width="7" height="6"><polygon points="0,0 7,0 3.5,6" fill="#000"/></svg>
<div style="position:absolute;left:712.5px;top:302.84px;font-size:12px;line-height:12px;font-weight:normal;color:#000;white-space:nowrap;">Punkte:</div>
<div style="position:absolute;left:778px;top:296px;width:40px;height:20px;background:#fff;"></div>
<div style="position:absolute;left:779px;top:299.84px;font-size:12px;line-height:12px;font-weight:normal;color:#000;white-space:nowrap;">3</div>
<div style="position:absolute;left:828px;top:296px;width:13px;height:18px;border:1px solid #000;background:#d1d2d7;box-shadow: inset 1px 1px #fff, inset -1px -1px #3a3a3a, inset 2px 2px #eeeef0, inset -2px -2px #9a9a9a;"></div>
<svg style="position:absolute;left:828px;top:296px" width="15" height="20" shape-rendering="crispEdges"><rect x="4" y="9" width="6" height="2"/><rect x="6" y="7" width="2" height="6"/></svg>
<div style="position:absolute;left:848px;top:296px;width:13px;height:18px;border:1px solid #000;background:#d1d2d7;box-shadow: inset 1px 1px #fff, inset -1px -1px #3a3a3a, inset 2px 2px #eeeef0, inset -2px -2px #9a9a9a;"></div>
<svg style="position:absolute;left:848px;top:296px" width="15" height="20" shape-rendering="crispEdges"><rect x="6" y="10" width="4" height="2"/></svg>
<div style="position:absolute;left:712.5px;top:332.84px;font-size:12px;line-height:12px;font-weight:normal;color:#000;white-space:nowrap;">Akt. Pkt.:</div>
<div style="position:absolute;left:778px;top:326px;width:40px;height:20px;background:#fff;"></div>
<div style="position:absolute;left:779px;top:329.84px;font-size:12px;line-height:12px;font-weight:normal;color:#000;white-space:nowrap;">2</div>
<div style="position:absolute;left:828px;top:326px;width:13px;height:18px;border:1px solid #000;background:#d1d2d7;box-shadow: inset 1px 1px #fff, inset -1px -1px #3a3a3a, inset 2px 2px #eeeef0, inset -2px -2px #9a9a9a;"></div>
<svg style="position:absolute;left:831.5px;top:333.5px" width="7" height="6"><polygon points="0,6 7,6 3.5,0" fill="#000"/></svg>
<div style="position:absolute;left:848px;top:326px;width:13px;height:18px;border:1px solid #000;background:#d1d2d7;box-shadow: inset 1px 1px #fff, inset -1px -1px #3a3a3a, inset 2px 2px #eeeef0, inset -2px -2px #9a9a9a;"></div>
<svg style="position:absolute;left:851.5px;top:332.5px" width="7" height="6"><polygon points="0,0 7,0 3.5,6" fill="#000"/></svg>
<div style="position:absolute;left:712.5px;top:362.84px;font-size:12px;line-height:12px;font-weight:normal;color:#000;white-space:nowrap;">A[%]:</div>
<div style="position:absolute;left:778px;top:356px;width:40px;height:20px;background:#fff;"></div>
<div style="position:absolute;left:779px;top:359.84px;font-size:12px;line-height:12px;font-weight:normal;color:#000;white-space:nowrap;">40</div>
<div style="position:absolute;left:828px;top:356px;width:13px;height:18px;border:1px solid #000;background:#d1d2d7;box-shadow: inset 1px 1px #fff, inset -1px -1px #3a3a3a, inset 2px 2px #eeeef0, inset -2px -2px #9a9a9a;"></div>
<svg style="position:absolute;left:831.5px;top:363.5px" width="7" height="6"><polygon points="0,6 7,6 3.5,0" fill="#000"/></svg>
<div style="position:absolute;left:848px;top:356px;width:13px;height:18px;border:1px solid #000;background:#d1d2d7;box-shadow: inset 1px 1px #fff, inset -1px -1px #3a3a3a, inset 2px 2px #eeeef0, inset -2px -2px #9a9a9a;"></div>
<svg style="position:absolute;left:851.5px;top:362.5px" width="7" height="6"><polygon points="0,0 7,0 3.5,6" fill="#000"/></svg>
<div style="position:absolute;left:712.5px;top:392.84px;font-size:12px;line-height:12px;font-weight:normal;color:#000;white-space:nowrap;">Pos.:</div>
<div style="position:absolute;left:778px;top:386px;width:40px;height:20px;background:#fff;"></div>
<div style="position:absolute;left:779px;top:389.84px;font-size:12px;line-height:12px;font-weight:normal;color:#000;white-space:nowrap;">50</div>
<div style="position:absolute;left:828px;top:386px;width:13px;height:18px;border:1px solid #000;background:#d1d2d7;box-shadow: inset 1px 1px #fff, inset -1px -1px #3a3a3a, inset 2px 2px #eeeef0, inset -2px -2px #9a9a9a;"></div>
<svg style="position:absolute;left:831.5px;top:393.5px" width="7" height="6"><polygon points="0,6 7,6 3.5,0" fill="#000"/></svg>
<div style="position:absolute;left:848px;top:386px;width:13px;height:18px;border:1px solid #000;background:#d1d2d7;box-shadow: inset 1px 1px #fff, inset -1px -1px #3a3a3a, inset 2px 2px #eeeef0, inset -2px -2px #9a9a9a;"></div>
<svg style="position:absolute;left:851.5px;top:392.5px" width="7" height="6"><polygon points="0,0 7,0 3.5,6" fill="#000"/></svg>
<div style="position:absolute;left:708px;top:416px;width:160px;height:85px;background:#1b1b1b;box-shadow: inset 0 0 0 1px #2a2a2a, inset 0 0 0 2px #6f6a55;"></div>
<svg style="position:absolute;left:708px;top:416px" width="160" height="85"><polyline points="4.5,4.5 79.5,49.5 154.5,79.5" fill="none" stroke="#c9a27a" stroke-width="1" shape-rendering="crispEdges"/><rect x="3" y="3" width="3" height="3" fill="#c9a27a"/><rect x="78" y="48" width="3" height="3" fill="#c9a27a"/><rect x="153" y="78" width="3" height="3" fill="#c9a27a"/></svg>
<div style="position:absolute;left:533px;top:432.84px;font-size:12px;line-height:12px;font-weight:bold;color:#000;white-space:nowrap;">Loop</div>
<div style="position:absolute;left:533px;top:462.84px;font-size:12px;line-height:12px;font-weight:normal;color:#000;white-space:nowrap;">Typ:</div>
<div style="position:absolute;left:598px;top:456px;width:78px;height:15px;border:1px solid #000;background:#d1d2d7;"></div>
<div style="position:absolute;left:660px;top:457px;width:2px;height:15px;background:#000;"></div>
<div style="position:absolute;left:662px;top:457px;width:15px;height:15px;background:#d1d2d7;box-shadow: inset 1px 1px #fff, inset -1px -1px #3a3a3a, inset -2px -2px #9a9a9a;"></div>
<svg style="position:absolute;left:666.0px;top:461.5px" width="7" height="6"><polygon points="0,0 7,0 3.5,6" fill="#000"/></svg>
<div style="position:absolute;left:533px;top:492.84px;font-size:12px;line-height:12px;font-weight:normal;color:#000;white-space:nowrap;">Verb.-Lp.:</div>
<div style="position:absolute;left:598px;top:486px;width:40px;height:20px;background:#fff;"></div>
<div style="position:absolute;left:648px;top:486px;width:13px;height:18px;border:1px solid #000;background:#d1d2d7;box-shadow: inset 1px 1px #fff, inset -1px -1px #3a3a3a, inset 2px 2px #eeeef0, inset -2px -2px #9a9a9a;"></div>
<svg style="position:absolute;left:651.5px;top:493.5px" width="7" height="6"><polygon points="0,6 7,6 3.5,0" fill="#000"/></svg>
<div style="position:absolute;left:668px;top:486px;width:13px;height:18px;border:1px solid #000;background:#d1d2d7;box-shadow: inset 1px 1px #fff, inset -1px -1px #3a3a3a, inset 2px 2px #eeeef0, inset -2px -2px #9a9a9a;"></div>
<svg style="position:absolute;left:671.5px;top:492.5px" width="7" height="6"><polygon points="0,0 7,0 3.5,6" fill="#000"/></svg>
<div style="position:absolute;left:533px;top:522.84px;font-size:12px;line-height:12px;font-weight:normal;color:#000;white-space:nowrap;">Anz.:</div>
<div style="position:absolute;left:598px;top:516px;width:40px;height:20px;background:#fff;"></div>
<div style="position:absolute;left:648px;top:516px;width:13px;height:18px;border:1px solid #000;background:#d1d2d7;box-shadow: inset 1px 1px #fff, inset -1px -1px #3a3a3a, inset 2px 2px #eeeef0, inset -2px -2px #9a9a9a;"></div>
<svg style="position:absolute;left:651.5px;top:523.5px" width="7" height="6"><polygon points="0,6 7,6 3.5,0" fill="#000"/></svg>
<div style="position:absolute;left:668px;top:516px;width:13px;height:18px;border:1px solid #000;background:#d1d2d7;box-shadow: inset 1px 1px #fff, inset -1px -1px #3a3a3a, inset 2px 2px #eeeef0, inset -2px -2px #9a9a9a;"></div>
<svg style="position:absolute;left:671.5px;top:522.5px" width="7" height="6"><polygon points="0,0 7,0 3.5,6" fill="#000"/></svg>
<div style="position:absolute;left:533px;top:562.84px;font-size:12px;line-height:12px;font-weight:bold;color:#000;white-space:nowrap;">Klangdatei</div>
<div style="position:absolute;left:528px;top:586px;width:25px;height:25px;background:#fcfcfd;box-shadow: inset 1px 1px #bcbcc4, inset -1px -1px #d8d8de;"></div>
<div style="position:absolute;left:563px;top:586px;width:25px;height:25px;background:#fcfcfd;box-shadow: inset 1px 1px #bcbcc4, inset -1px -1px #d8d8de;"></div>
<div style="position:absolute;left:603px;top:586px;width:25px;height:25px;background:#fcfcfd;box-shadow: inset 1px 1px #bcbcc4, inset -1px -1px #d8d8de;"></div>
<div style="position:absolute;left:638px;top:586px;width:25px;height:25px;background:#fcfcfd;box-shadow: inset 1px 1px #bcbcc4, inset -1px -1px #d8d8de;"></div>
<div style="position:absolute;left:673px;top:586px;width:25px;height:25px;background:#fcfcfd;box-shadow: inset 1px 1px #bcbcc4, inset -1px -1px #d8d8de;"></div>
<svg style="position:absolute;left:528px;top:586px" width="25" height="25">
<rect x="6.5" y="5.5" width="13" height="10" fill="#dcdcdc" stroke="#9a9a9a"/>
<rect x="8" y="7" width="10" height="7" fill="#111"/>
<path d="M8.5,11.5 C10,8.5 11.5,8.5 13,10.5 S16,12.5 17.5,9.5" stroke="#e6d84a" fill="none" stroke-width="1.1"/>
<rect x="5" y="16" width="16" height="4.5" fill="#c8c8c8"/>
<rect x="6" y="16" width="14" height="1" fill="#707070"/>
<rect x="6" y="17.5" width="14" height="2" fill="#e8e8d8"/>
<path d="M7,18.5h12" stroke="#8a8a80" stroke-width="0.8" stroke-dasharray="1.2,0.8"/>
<rect x="5" y="20" width="16" height="1" fill="#8a8a8a"/>
</svg>
<svg style="position:absolute;left:563px;top:586px" width="25" height="25">
<defs><radialGradient id="pg" cx="0.4" cy="0.35" r="0.7"><stop offset="0" stop-color="#fafafa"/><stop offset="1" stop-color="#cfcfcf"/></radialGradient></defs>
<circle cx="12.5" cy="12.3" r="7.3" fill="url(#pg)" stroke="#a0a0a0" stroke-width="1"/>
<polygon points="11,9.6 15.2,12.4 11,15.2" fill="#000"/>
</svg>
<svg style="position:absolute;left:603px;top:586px" width="25" height="25">
<rect x="5.5" y="5.5" width="7" height="15" fill="#e2dfd4" stroke="#8a887e"/>
<path d="M7,9h4M7,11h4M7,17h4M7,18.5h4" stroke="#9a988c" stroke-width="0.8"/>
<polygon points="15.5,5.8 21,11.8 17.5,11.8 17.5,18.5 14,18.5 14,11.8 10,11.8" fill="#7ea2d6" stroke="#4f6e9c" stroke-width="0.9"/>
</svg>
<svg style="position:absolute;left:638px;top:586px" width="25" height="25">
<defs><linearGradient id="fg" x1="0" y1="0" x2="0" y2="1"><stop offset="0" stop-color="#fbfbfb"/><stop offset="1" stop-color="#d0d0d4"/></linearGradient></defs>
<path d="M6,5.5 H20 L20.8,6.5 V20 L19.8,20.8 H6.5 L5.2,19.5 V6.3 Z" fill="#6d7b94" stroke="#4d5668" stroke-width="0.9"/>
<rect x="8" y="6" width="10" height="6" fill="url(#fg)"/>
<rect x="9.3" y="15" width="7.2" height="5" fill="#ececee"/>
<rect x="10" y="16" width="1.6" height="2.8" fill="#3a4050"/>
</svg>
<svg style="position:absolute;left:673px;top:586px" width="25" height="25">
<rect x="5.5" y="5.5" width="9" height="11" fill="#fafafa" stroke="#6e6e6e"/>
<rect x="7.3" y="8" width="2.6" height="2.6" fill="#9a9a9a"/><path d="M7.3,12.5h4M7.3,14.3h4" stroke="#9a9a9a"/>
<rect x="11.5" y="8.5" width="9" height="11" fill="#fafafa" stroke="#6e6e6e"/>
<rect x="13.3" y="11" width="2.8" height="2.8" fill="#9a9a9a"/><path d="M17,11.5h2M17,13.5h2M13.3,15.7h5.7M13.3,17.5h5.7" stroke="#9a9a9a"/>
</svg>
<div style="position:absolute;left:533px;top:627.84px;font-size:12px;line-height:12px;font-weight:normal;color:#000;white-space:nowrap;">Dateiname:</div>
<div style="position:absolute;left:608px;top:621px;width:90px;height:20px;background:#fff;"></div>
<div style="position:absolute;left:609px;top:624.84px;font-size:12px;line-height:12px;font-weight:normal;color:#000;white-space:nowrap;">Perc.casp</div>
<div style="position:absolute;left:533px;top:657.84px;font-size:12px;line-height:12px;font-weight:normal;color:#000;white-space:nowrap;">Samplerate:</div>
<div style="position:absolute;left:638px;top:651px;width:60px;height:20px;background:#fff;"></div>
<div style="position:absolute;left:639px;top:654.84px;font-size:12px;line-height:12px;font-weight:normal;color:#000;white-space:nowrap;">44100</div>
<div style="position:absolute;left:533px;top:687.84px;font-size:12px;line-height:12px;font-weight:normal;color:#000;white-space:nowrap;">CAS:</div>
<div style="position:absolute;left:568px;top:681px;width:130px;height:20px;background:#fff;"></div>
<div style="position:absolute;left:571px;top:684.84px;font-size:12px;line-height:12px;font-weight:normal;color:#000;white-space:nowrap;">v1.00.31</div>
<div style="position:absolute;left:638px;top:706px;width:58px;height:18px;border:1px solid #000;background:#d1d2d7;box-shadow: inset 1px 1px #fff, inset -1px -1px #3a3a3a, inset 2px 2px #eeeef0, inset -2px -2px #9a9a9a;"></div>
<div style="position:absolute;left:568.0px;width:200px;text-align:center;top:711.38px;font-size:9px;line-height:9px;font-weight:normal;color:#000;white-space:nowrap;letter-spacing:0.5px;font-weight:bold;">Tracing</div>
<div style="position:absolute;left:713px;top:586px;width:170px;height:140px;background:#000;"></div>
<div style="position:absolute;left:714px;top:587px;width:152px;height:138px;background:#d1d2d7;"></div>
<div style="position:absolute;left:716px;top:587.84px;font-size:12px;line-height:12px;font-weight:normal;color:#000;white-space:nowrap;">AM.casp</div>
<div style="position:absolute;left:716px;top:602.84px;font-size:12px;line-height:12px;font-weight:normal;color:#000;white-space:nowrap;">FM.casp</div>
<div style="position:absolute;left:716px;top:617.84px;font-size:12px;line-height:12px;font-weight:normal;color:#000;white-space:nowrap;">FX5.casp</div>
<div style="position:absolute;left:716px;top:632.84px;font-size:12px;line-height:12px;font-weight:normal;color:#000;white-space:nowrap;">Hard Synth.casp</div>
<div style="position:absolute;left:714px;top:646px;width:152px;height:15px;background:#000080;"></div>
<div style="position:absolute;left:716px;top:647.84px;font-size:12px;line-height:12px;font-weight:normal;color:#fff;white-space:nowrap;">Perc.casp</div>
<div style="position:absolute;left:716px;top:662.84px;font-size:12px;line-height:12px;font-weight:normal;color:#000;white-space:nowrap;">User.casp</div>
<div style="position:absolute;left:716px;top:677.84px;font-size:12px;line-height:12px;font-weight:normal;color:#000;white-space:nowrap;">User1.casp</div>
<div style="position:absolute;left:716px;top:692.84px;font-size:12px;line-height:12px;font-weight:normal;color:#000;white-space:nowrap;">User2.casp</div>
<div style="position:absolute;left:716px;top:707.84px;font-size:12px;line-height:12px;font-weight:normal;color:#000;white-space:nowrap;">WaveFilter.casp</div>
<div style="position:absolute;left:867px;top:587px;width:15px;height:15px;background:#d1d2d7;box-shadow: inset 1px 1px #fff, inset -1px -1px #3a3a3a, inset -2px -2px #9a9a9a;"></div>
<svg style="position:absolute;left:870.5px;top:591.5px" width="7" height="5"><polygon points="0,5 7,5 3.5,0" fill="#000"/></svg>
<div style="position:absolute;left:867px;top:603px;width:15px;height:89px;background:#d1d2d7;box-shadow: inset 2px 1px #fff, inset -1px -1px #3a3a3a, inset -2px -2px #9a9a9a;"></div>
<div style="position:absolute;left:867px;top:693px;width:15px;height:13px;background:#d1d2d7;box-shadow: inset 1px 1px #fff, inset -1px -1px #3a3a3a, inset -2px -2px #9a9a9a;"></div>
<div style="position:absolute;left:867px;top:708px;width:15px;height:17px;background:#d1d2d7;box-shadow: inset 1px 1px #fff, inset -1px -1px #3a3a3a, inset -2px -2px #9a9a9a;"></div>
<svg style="position:absolute;left:870.5px;top:713.5px" width="7" height="5"><polygon points="0,0 7,0 3.5,5" fill="#000"/></svg>
</body></html>
